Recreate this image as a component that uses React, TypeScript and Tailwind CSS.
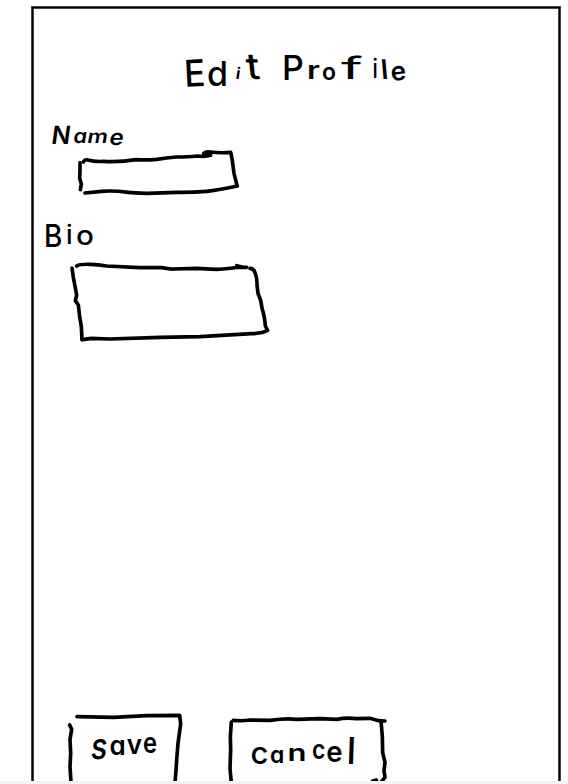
import React from "react";

type Glyph = [char: string, style: string];

function Lettering({ glyphs, className = "" }: { glyphs: Glyph[]; className?: string }) {
  return (
    <span
      className={`flex items-baseline whitespace-pre font-['Inter',sans-serif] font-semibold leading-none text-black [font-feature-settings:'cv11'] ${className}`}
    >
      {glyphs.map(([char, style], i) => (
        <span key={i} className={`block shrink-0 origin-bottom-left ${style}`}>
          {char}
        </span>
      ))}
    </span>
  );
}

const title: Glyph[] = [
  ["E", "w-[22px] text-[37px] font-medium translate-y-[8px] -rotate-3 scale-x-95"],
  ["d", "w-[28px] text-[34px] font-medium translate-y-[7px]"],
  ["i", "w-[13px] text-[16px] font-bold translate-y-0 skew-x-[-8deg]"],
  ["t", "w-[19px] text-[36px] font-medium skew-x-6 scale-x-110"],
  [" ", "w-[15px] text-[20px]"],
  ["P", "w-[25px] text-[34px] font-medium translate-y-px"],
  ["r", "w-[15px] text-[25px] scale-x-130"],
  ["o", "w-[19px] text-[23px] translate-y-px"],
  ["f", "w-[31px] text-[31px] font-normal scale-x-[1.9] translate-y-0"],
  ["i", "w-[10px] text-[26px] font-normal -translate-y-px"],
  ["l", "w-[10px] text-[27px] skew-x-[5deg]"],
  ["e", "w-[17px] text-[26px] translate-y-[2px] -rotate-6"],
];

const nameLabel: Glyph[] = [
  ["N", "w-[22px] text-[25px] font-semibold translate-y-[2px] skew-x-[-8deg]"],
  ["a", "w-[14px] text-[20px] translate-y-px scale-x-110 skew-x-[-8deg]"],
  ["m", "w-[22px] text-[19px] translate-y-px scale-x-120 skew-x-[-8deg]"],
  ["e", "w-[14px] text-[22px] translate-y-[3px] scale-x-110 skew-x-[-8deg]"],
];

const bioLabel: Glyph[] = [
  ["B", "w-[22px] text-[31px] font-medium translate-y-px scale-x-90"],
  ["i", "w-[10px] text-[26px] font-medium -translate-y-[2px]"],
  ["o", "w-[18px] text-[27px] font-medium -translate-y-px scale-x-110"],
];

const saveLabel: Glyph[] = [
  ["s", "w-[20px] text-[36px] font-medium translate-y-[4px] scale-x-[.85] skew-x-[-8deg]"],
  ["a", "w-[17px] text-[26px]"],
  ["v", "w-[17px] text-[26px] -translate-y-px"],
  ["e", "w-[15px] text-[28px] -translate-y-[2px] scale-x-85"],
];

const cancelLabel: Glyph[] = [
  ["c", "w-[21px] text-[31px] font-medium translate-y-[2px]"],
  ["a", "w-[14px] text-[23px] translate-y-px"],
  ["n", "w-[28px] text-[23px] -translate-x-[6px] -translate-y-px scale-x-[1.35]"],
  ["c", "w-[14px] text-[27px] -translate-y-[3px] scale-x-85"],
  ["e", "w-[20px] text-[29px] -translate-x-px translate-y-0 scale-x-95"],
  ["l", "w-[8px] text-[37px] font-medium translate-y-[2px] skew-x-[-2deg]"],
];

function Sketch({ viewBox, paths, className }: { viewBox: string; paths: string[]; className: string }) {
  return (
    <svg viewBox={viewBox} aria-hidden="true" className={`block ${className}`} fill="none" stroke="#000" strokeWidth="11" strokeLinecap="round" strokeLinejoin="round">
      {paths.map((d) => (
        <path key={d} d={d} />
      ))}
    </svg>
  );
}

export default function App() {
  return (
    <main className="h-[784px] w-[568px] overflow-hidden bg-[#f3f3f3]">
      <div className="h-[781px] overflow-hidden bg-white pl-[32px] pt-[7px]">
        <section className="flex h-[800px] w-[528px] flex-col border border-black shadow-[0_0_0_1px_#444,inset_0_0_0_1px_#444]">
          <h1 className="ml-[152px] mt-[39px] h-[74px]">
            <Lettering glyphs={title} />
          </h1>

          <label className="ml-[17px] block h-[27px]">
            <Lettering glyphs={nameLabel} />
          </label>
          <Sketch
            className="ml-[41px] h-[50px] w-[170px]"
            viewBox="132 114 510 150"
            paths={[
              "M160 156 Q165 147 174 150 Q196 156 220 154 Q270 157 318 149 Q350 151 380 148 Q410 143 438 141 Q475 141 502 138 Q525 141 542 136 Q542 130 532 132 L521 131 Q526 124 541 126 Q572 130 602 127 L606 145 L612 190 L621 226",
              "M622 228 Q560 241 530 244 Q480 248 440 247 L350 250 Q310 249 295 247 Q248 241 215 244 L165 249",
              "M150 158 L150 182 L149 205 L154 222 L151 239",
            ]}
          />

          <label className="ml-[11px] mt-[21px] block h-[41px]">
            <Lettering glyphs={bioLabel} />
          </label>
          <Sketch
            className="ml-[35px] h-[84px] w-[204px]"
            viewBox="114 150 612 252"
            paths={[
              "M140 168 Q150 162 180 163 Q205 164 230 168 L330 173 L395 173 Q420 178 430 177 L500 175 L560 178 Q600 177 620 172 L650 172 M620 167 L640 172",
              "M660 175 Q672 176 675 188 Q682 205 681 225 L684 250 Q694 270 696 294 Q705 325 706 348 L713 361 Q700 370 665 371 L510 380 L390 382 L240 387 L185 385 L157 389",
              "M126 174 L130 202 L140 255 L136 272 L145 285 L149 320 L154 350 L156 389",
            ]}
          />

          <div className="ml-[33px] mt-[367px] flex gap-[43px]">
            <button className="relative h-[70px] w-[118px]">
              <Sketch
                className="h-[70px] w-[118px]"
                viewBox="48 33 354 210"
                paths={["M81 50 L190 52 L290 47 L389 46 L392 72 L384 130 L380 180 L378 212 L375 248", "M59 75 L65 88 L60 118 L62 160 L60 200 L63 248"]}
              />
              <Lettering className="absolute left-[23px] top-[13px]" glyphs={saveLabel} />
            </button>
            <button className="relative h-[70px] w-[162px]">
              <Sketch
                className="h-[70px] w-[162px]"
                viewBox="51 33 486 210"
                paths={["M70 61 Q95 64 120 60 L180 61 Q230 54 260 58 L330 56 L380 58 Q410 52 440 56 L480 55 L506 62 L525 63", "M64 66 L61 110 L62 150 L60 205 L64 248", "M513 63 L517 110 L518 158 L525 187 L522 212 L525 232 L512 248 M488 243 L499 240"]}
              />
              <Lettering className="absolute left-[22px] top-[19px]" glyphs={cancelLabel} />
            </button>
          </div>
        </section>
      </div>
    </main>
  );
}
